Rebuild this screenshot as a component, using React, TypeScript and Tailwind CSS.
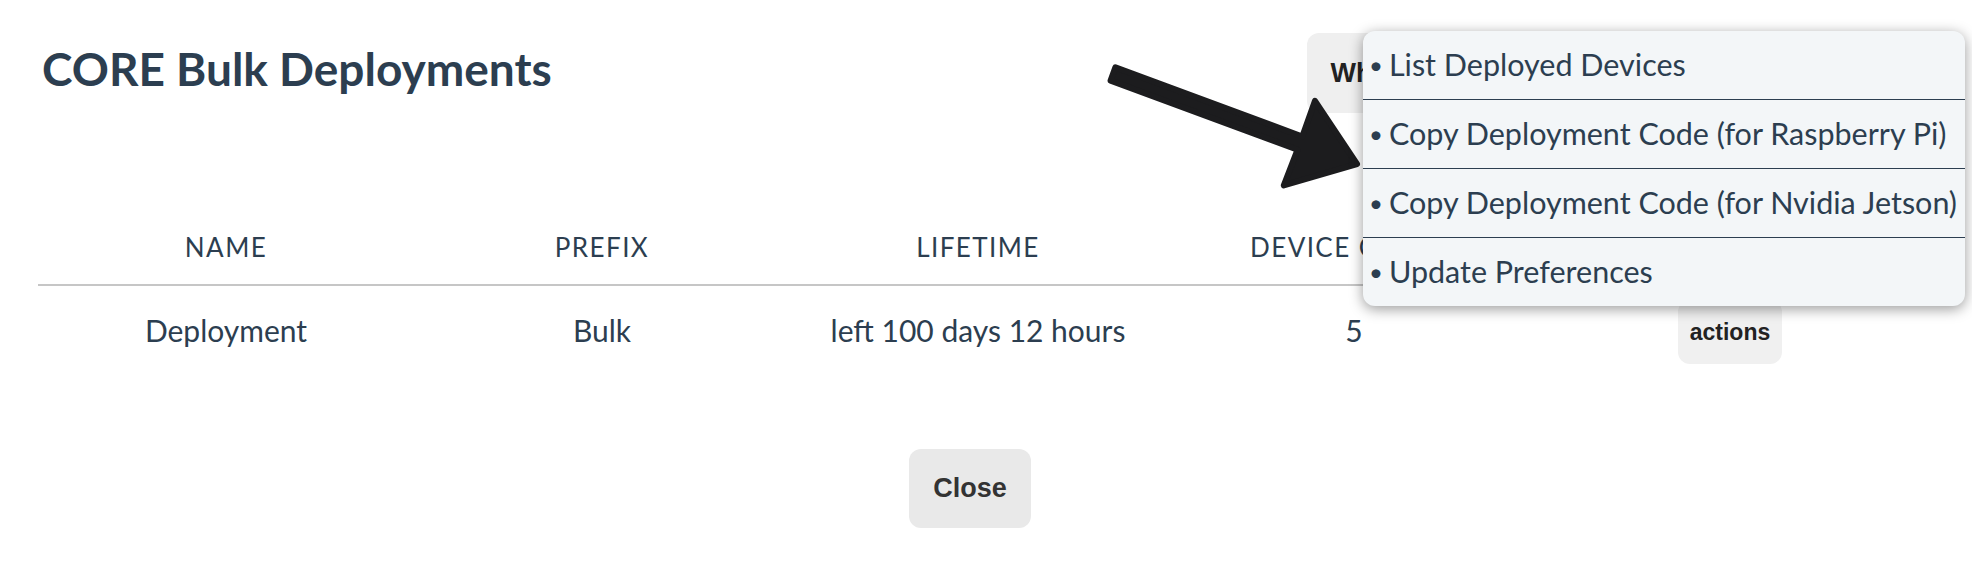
import React from 'react';

const columns = ['Name', 'Prefix', 'Lifetime', 'Device Count', 'Actions'];

const menuItems = [
  'List Deployed Devices',
  'Copy Deployment Code (for Raspberry Pi)',
  'Copy Deployment Code (for Nvidia Jetson)',
  'Update Preferences',
];

function Arrow() {
  // annotation arrow drawn over the screenshot
  return (
    <svg
      className="absolute inset-0 pointer-events-none"
      width="1972"
      height="570"
      viewBox="0 0 1972 570"
    >
      <polygon
        points="1115.4,67.4 1302.3,136.5 1315,100.8 1357,164 1283.8,185.4 1297.5,149.7 1110.6,80.6"
        fill="#1c1c1e"
        stroke="#1c1c1e"
        strokeWidth="6"
        strokeLinejoin="round"
      />
    </svg>
  );
}

export default function App() {
  return (
    <div className="relative w-[1972px] h-[570px] overflow-hidden bg-white text-[#2c3e50] font-['Lato','Noto_Sans',sans-serif]">
      <div className="w-[1940px]">
        {/* Header */}
        <div className="flex items-center h-[80px] mt-[33px]">
          <h1 className="ml-[42px] mb-[8px] text-[46px] font-bold leading-none">
            CORE Bulk Deployments
          </h1>
          <button className="ml-auto mr-[473px] h-[80px] px-[24px] rounded-[12px] bg-[#efefef] text-[27px] font-bold text-[#222] font-['Liberation_Sans',Arial,sans-serif]">
            Whitelist
          </button>
        </div>

        {/* Table */}
        <div className="ml-[38px] w-[1880px] mt-[102px]">
          <div className="grid grid-cols-5 h-[71px] items-center pb-[4px] border-b-2 border-[#c6c6c6]">
            {columns.map((c) => (
              <div key={c} className="text-center uppercase text-[26px] tracking-[0.055em]">
                {c}
              </div>
            ))}
          </div>
          <div className="grid grid-cols-5 h-[88px] items-center text-[30px]">
            <div className="text-center">Deployment</div>
            <div className="text-center">Bulk</div>
            <div className="text-center">left 100 days 12 hours</div>
            <div className="text-center">5</div>
            <div className="flex justify-center">
              <button className="h-[64px] mt-[4px] px-[12px] rounded-[12px] bg-[#f0f0f0] text-[23px] font-bold text-[#222] font-['Liberation_Sans',Arial,sans-serif]">
                actions
              </button>
            </div>
          </div>
        </div>

        <div className="flex justify-center mt-[75px]">
          <button className="w-[122px] h-[79px] rounded-[12px] bg-[#e9e9e9] text-[27px] font-bold text-[#333] font-['Liberation_Sans',Arial,sans-serif]">
            Close
          </button>
        </div>
      </div>

      <Arrow />

      {/* Dropdown menu */}
      <div className="absolute left-[1363px] top-[31px] w-[602px] rounded-[12px] bg-[#f3f6f8] shadow-[0_3px_14px_rgba(0,0,0,0.4)] overflow-hidden">
        {menuItems.map((item, i) => (
          <div
            key={item}
            className={
              'h-[68px] flex items-center pl-[6px] text-[30.5px] whitespace-nowrap ' +
              (i < menuItems.length - 1 ? 'border-b border-[#2c3e50] box-content' : '')
            }
          >
            <span className="text-[24px] mr-[6px]">•</span>
            {item}
          </div>
        ))}
      </div>
    </div>
  );
}
